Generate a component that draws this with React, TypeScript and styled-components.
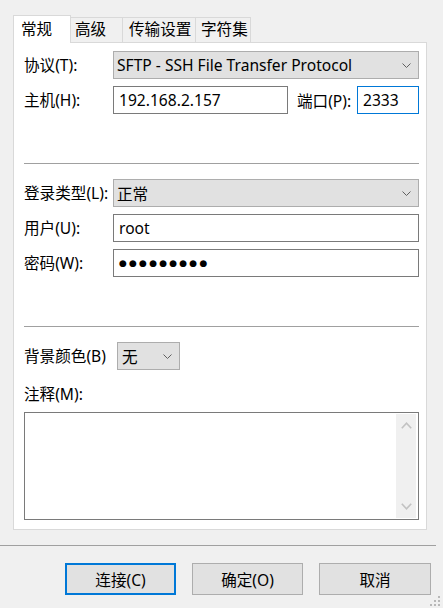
import React from "react";
import styled, { createGlobalStyle } from "styled-components";

const GlobalStyle = createGlobalStyle`
  html, body {
    margin: 0;
    padding: 0;
    background: #f0f0f0;
  }
  body {
    font-family: "Noto Sans", "Noto Sans CJK SC", sans-serif;
    font-size: 15.6px;
    color: #000;
  }
  * { box-sizing: border-box; }
`;

const Dialog = styled.div`
  position: relative;
  width: 443px;
  height: 608px;
  background: #f0f0f0;
  display: flex;
  flex-direction: column;
  overflow: hidden;
`;

const TabArea = styled.div`
  padding: 15px 16px 0 13px;
  display: flex;
  flex-direction: column;
`;

const TabStrip = styled.div`
  display: flex;
  align-items: flex-start;
  height: 27px;
`;

const Tab = styled.div<{ $active?: boolean; $w: number; $pl: number }>`
  position: relative;
  z-index: ${(p) => (p.$active ? 2 : 1)};
  width: ${(p) => p.$w}px;
  height: ${(p) => (p.$active ? 28 : 25)}px;
  margin-top: ${(p) => (p.$active ? 0 : 2)}px;
  margin-left: -1px;
  &:first-child { margin-left: 0; }
  border: 1px solid #d9d9d9;
  border-bottom: none;
  background: ${(p) => (p.$active ? "#ffffff" : "#f0f0f0")};
  padding-left: ${(p) => p.$pl}px;
  display: flex;
  align-items: center;
  line-height: 1;
  white-space: nowrap;
`;

const Panel = styled.div`
  background: #fff;
  border: 1px solid #d9d9d9;
  width: 414px;
  height: 488px;
  padding: 8px 7px 9px 10px;
  display: flex;
  flex-direction: column;
`;

const FormGrid = styled.div`
  display: grid;
  grid-template-columns: 89px 1fr;
  row-gap: 7px;
  align-items: center;
`;

const Label = styled.label`
  line-height: 20px;
  white-space: nowrap;
`;

const Combo = styled.div<{ $w?: number }>`
  height: 28px;
  width: ${(p) => (p.$w ? `${p.$w}px` : "auto")};
  background: #e1e1e1;
  border: 1px solid #adadad;
  display: flex;
  align-items: center;
  justify-content: space-between;
  padding: 0 7px 0 3px;
  white-space: nowrap;
`;

const Input = styled.div<{ $focused?: boolean; $w?: number }>`
  height: 28px;
  width: ${(p) => (p.$w ? `${p.$w}px` : "auto")};
  background: #fff;
  border: 1px solid ${(p) => (p.$focused ? "#0078d7" : "#7a7a7a")};
  display: flex;
  align-items: center;
  padding-left: 5px;
  white-space: nowrap;
`;

const Dots = styled.span`
  font-family: "DejaVu Sans", sans-serif;
  font-size: 9px;
  letter-spacing: 2.2px;
  line-height: 1;
`;

const HostRow = styled.div`
  display: flex;
  align-items: center;
`;

const PortLabel = styled.label`
  margin-left: 9px;
  width: 60px;
  white-space: nowrap;
`;

const Separator = styled.div<{ $top: number; $bottom: number }>`
  height: 1px;
  background: #a0a0a0;
  margin-top: ${(p) => p.$top}px;
  margin-bottom: ${(p) => p.$bottom}px;
`;

const BgRow = styled.div`
  display: flex;
  align-items: center;
`;

const BgLabel = styled.label`
  width: 93px;
  line-height: 20px;
  white-space: nowrap;
`;

const NoteLabel = styled.label`
  display: block;
  line-height: 20px;
  margin: 14px 0 8px;
`;

const NoteBox = styled.div`
  height: 108px;
  border: 1px solid #7a7a7a;
  background: #fff;
  display: flex;
  padding: 1px 2px 1px 1px;
`;

const NoteText = styled.div`
  flex: 1;
`;

const ScrollBar = styled.div`
  width: 20px;
  background: #f0f0f0;
  display: flex;
  flex-direction: column;
  justify-content: space-between;
  align-items: center;
  padding: 8px 0 8px;
`;

const DialogSeparator = styled.div`
  width: 436px;
  height: 1px;
  background: #a0a0a0;
  margin-top: 15px;
`;

const ButtonRow = styled.div`
  display: flex;
  justify-content: flex-end;
  gap: 16px;
  padding: 17px 12px 0 0;
`;

const Button = styled.button<{ $default?: boolean; $w: number }>`
  width: ${(p) => p.$w}px;
  height: 32px;
  background: #e1e1e1;
  border: ${(p) => (p.$default ? "2px solid #0078d7" : "1px solid #adadad")};
  font-family: inherit;
  font-size: inherit;
  color: #000;
  padding: 0;
  display: flex;
  align-items: center;
  justify-content: center;
`;

const Grip = styled.svg`
  position: absolute;
  right: 2px;
  bottom: 1px;
`;

const Chevron = () => (
  <svg width="9" height="5" viewBox="0 0 9 5">
    <polyline points="0.5,0.5 4.5,4.5 8.5,0.5" fill="none" stroke="#606060" strokeWidth="1" />
  </svg>
);

const ScrollArrow = ({ up }: { up?: boolean }) => (
  <svg width="11" height="7" viewBox="0 0 11 7">
    <polyline
      points={up ? "0.8,6.2 5.5,1.2 10.2,6.2" : "0.8,0.8 5.5,5.8 10.2,0.8"}
      fill="none"
      stroke="#c2c2c2"
      strokeWidth="1.6"
    />
  </svg>
);

export default function App() {
  return (
    <>
      <GlobalStyle />
      <Dialog>
        <TabArea>
          <TabStrip>
            <Tab $active $w={58} $pl={7}>常规</Tab>
            <Tab $w={53} $pl={4}>高级</Tab>
            <Tab $w={74} $pl={6}>传输设置</Tab>
            <Tab $w={56} $pl={5}>字符集</Tab>
          </TabStrip>
          <Panel>
            <FormGrid>
              <Label>协议(T):</Label>
              <Combo>
                <span>SFTP - SSH File Transfer Protocol</span>
                <Chevron />
              </Combo>
              <Label>主机(H):</Label>
              <HostRow>
                <Input $w={175}>192.168.2.157</Input>
                <PortLabel>端口(P):</PortLabel>
                <Input $focused $w={62}>2333</Input>
              </HostRow>
            </FormGrid>
            <Separator $top={49} $bottom={15} />
            <FormGrid>
              <Label>登录类型(L):</Label>
              <Combo>
                <span>正常</span>
                <Chevron />
              </Combo>
              <Label>用户(U):</Label>
              <Input>root</Input>
              <Label>密码(W):</Label>
              <Input>
                <Dots>●●●●●●●●●</Dots>
              </Input>
            </FormGrid>
            <Separator $top={49} $bottom={15} />
            <BgRow>
              <BgLabel>背景颜色(B)</BgLabel>
              <Combo $w={63}>
                <span style={{ paddingLeft: 1 }}>无</span>
                <Chevron />
              </Combo>
            </BgRow>
            <NoteLabel>注释(M):</NoteLabel>
            <NoteBox>
              <NoteText />
              <ScrollBar>
                <ScrollArrow up />
                <ScrollArrow />
              </ScrollBar>
            </NoteBox>
          </Panel>
        </TabArea>
        <DialogSeparator />
        <ButtonRow>
          <Button $default $w={111}>连接(C)</Button>
          <Button $w={111}>确定(O)</Button>
          <Button $w={112}>取消</Button>
        </ButtonRow>
        <Grip width="12" height="12" viewBox="0 0 12 12">
          <g fill="#b8b8b8">
            <rect x="9" y="1" width="2" height="2" />
            <rect x="5" y="5" width="2" height="2" />
            <rect x="9" y="5" width="2" height="2" />
            <rect x="1" y="9" width="2" height="2" />
            <rect x="5" y="9" width="2" height="2" />
            <rect x="9" y="9" width="2" height="2" />
          </g>
        </Grip>
      </Dialog>
    </>
  );
}
